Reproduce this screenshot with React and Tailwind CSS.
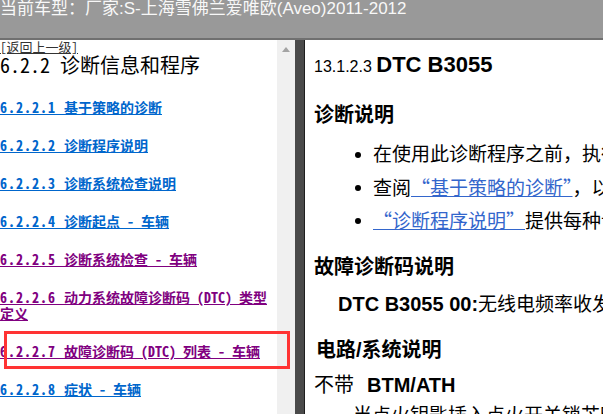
import React from 'react';

// 左侧目录：visited 的链接显示为紫色
const leftLinks = [
  { n: '6.2.2.1', t: '基于策略的诊断' },
  { n: '6.2.2.2', t: '诊断程序说明' },
  { n: '6.2.2.3', t: '诊断系统检查说明' },
  { n: '6.2.2.4', t: '诊断起点 - 车辆' },
  { n: '6.2.2.5', t: '诊断系统检查 - 车辆', visited: true },
  { n: '6.2.2.6', t: '动力系统故障诊断码 (DTC) 类型', t2: '定义', visited: true },
  { n: '6.2.2.7', t: '故障诊断码 (DTC) 列表 - 车辆', visited: true },
  { n: '6.2.2.8', t: '症状 - 车辆' },
];

const Bullet = ({ children }) => (
  <div className="flex items-center h-[24px] pl-[41px] whitespace-nowrap">
    <span className="w-[6px] h-[6px] rounded-full bg-black shrink-0" />
    <span className="ml-[12px]">{children}</span>
  </div>
);

// 全角引号用中文字体显示
const CnLink = ({ children }) => (
  <a className="text-[#3366cc] underline font-['Noto_Sans_CJK_SC',sans-serif]">{children}</a>
);

export default function App() {
  return (
    <div className="w-[603px] h-[414px] overflow-hidden relative bg-white flex flex-col">
      {/* 顶部车型栏 */}
      <div className="h-[40px] shrink-0 bg-[#999999] border-b-2 border-[#707070] overflow-hidden">
        <div className="-mt-[1px] text-[17px] leading-[20px] text-[#f8f8f8] whitespace-nowrap font-['Liberation_Sans','Noto_Sans_CJK_SC',sans-serif]">
          当前车型：厂家:S-上海雪佛兰爱唯欧(Aveo)2011-2012
        </div>
      </div>

      <div className="flex flex-1 min-h-0">
        {/* 左侧目录 */}
        <div className="w-[277px] shrink-0 overflow-hidden font-['Noto_Sans_Mono_CJK_SC','Liberation_Mono','Noto_Sans_CJK_SC',monospace]">
          <a className="block text-[13px] leading-[13px] text-[#333] underline whitespace-nowrap">[返回上一级]</a>
          <div className="mt-[2px] text-[20px] leading-[20px] text-black whitespace-nowrap">6.2.2 诊断信息和程序</div>
          <div className="mt-[24px] flex flex-col gap-[22px]">
            {leftLinks.map((l) => (
              <a
                key={l.n}
                className={`block text-[14px] leading-[16px] font-bold underline ${l.visited ? 'text-[#800080]' : 'text-[#0066cc]'}`}
              >
                <span className="tracking-[1px]">{l.n} </span>
                {l.t}
                {l.t2 && (
                  <>
                    <br />
                    {l.t2}
                  </>
                )}
              </a>
            ))}
          </div>
        </div>

        {/* 滚动条 */}
        <div className="w-[18px] shrink-0 bg-[#f0f0f0] flex justify-center pt-[7px]">
          <svg width="8" height="5" viewBox="0 0 8 5">
            <path d="M4 0 L8 5 L0 5 Z" fill="#a3a3a3" />
          </svg>
        </div>

        {/* 分隔条 */}
        <div className="w-[10px] shrink-0 bg-[#4a4a4a] border-r border-[#1e1e1e]" />

        {/* 右侧内容 */}
        <div className="flex-1 min-w-0 overflow-hidden pl-[9px] text-black text-[19px] font-['Liberation_Sans','Noto_Sans_CJK_SC',sans-serif]">
          <div className="mt-[12px] leading-[26px] whitespace-nowrap">
            <span className="text-[16px]">13.1.2.3 </span>
            <span className="text-[22px] font-bold">DTC B3055</span>
          </div>

          <div className="mt-[23px] text-[20px] leading-[24px] font-bold">诊断说明</div>

          <div className="mt-[16px] flex flex-col gap-[9px]">
            <Bullet>在使用此诊断程序之前，执行诊断系统检查</Bullet>
            <Bullet>
              查阅<CnLink>“基于策略的诊断”</CnLink>，以获得诊断方法
            </Bullet>
            <Bullet>
              <CnLink>“诊断程序说明”</CnLink>提供每种诊断类别的概述
            </Bullet>
          </div>

          <div className="mt-[22px] text-[20px] leading-[24px] font-bold">故障诊断码说明</div>

          <div className="mt-[13px] pl-[24px] leading-[24px] whitespace-nowrap">
            <span className="text-[20px] font-bold">DTC B3055 00:</span>
            <span>无线电频率收发器性能</span>
          </div>

          <div className="mt-[21px] pl-[2px] text-[20px] leading-[24px] font-bold">电路/系统说明</div>

          <div className="mt-[11px] leading-[24px] whitespace-nowrap">
            <span className="text-[20px]">不带</span>
            <span className="ml-[13px] text-[20px] font-bold">BTM/ATH</span>
          </div>

          <div className="mt-[6px] pl-[39px] leading-[24px] whitespace-nowrap">
            当点火钥匙插入点火开关锁芯时
          </div>
        </div>
      </div>

      {/* 红色标注框 */}
      <div className="absolute left-[4px] top-[331px] w-[286px] h-[38px] border-[3px] border-[#ff3333] pointer-events-none" />
    </div>
  );
}
